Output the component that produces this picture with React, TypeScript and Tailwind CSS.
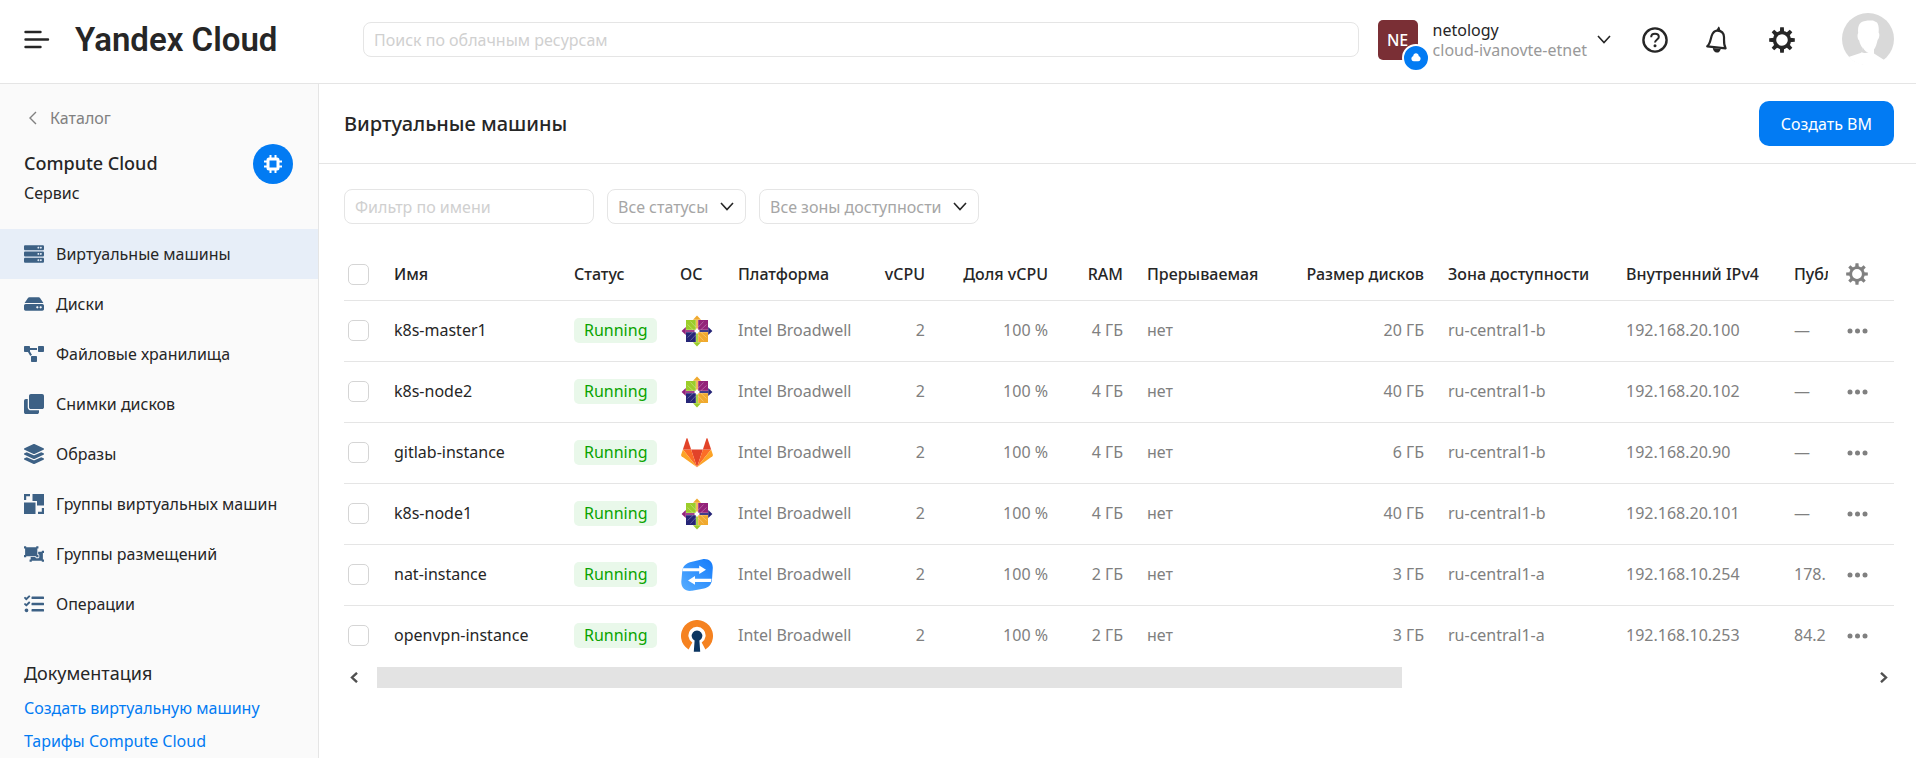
import { useEffect, useRef, useState, type ReactNode } from "react";
import { FaServer, FaHdd, FaProjectDiagram, FaClone, FaLayerGroup, FaObjectUngroup, FaTasks } from "react-icons/fa";

const teeth = [0, 45, 90, 135, 180, 225, 270, 315];

function Gear({ size, className }: { size: number; className?: string }) {
  return (
    <svg width={size} height={size} viewBox="0 0 26 26" className={className} aria-hidden="true">
      <circle cx="13" cy="13" r="7.5" fill="none" stroke="currentColor" strokeWidth="3.4" />
      {teeth.map((a) => (
        <path key={a} d="M10.8 5.5 L11.2 0.2 H14.8 L15.2 5.5 Z" fill="currentColor" transform={`rotate(${a} 13 13)`} />
      ))}
    </svg>
  );
}

function Chevron({ className }: { className?: string }) {
  return (
    <svg width="14" height="9" viewBox="0 0 14 9" fill="none" stroke="currentColor" strokeWidth="1.6" className={className} aria-hidden="true">
      <path d="M1 1 L7 7.5 L13 1" />
    </svg>
  );
}

function ScaleIcon() {
  return (
    <svg width="20" height="20" viewBox="0 0 20 20" fill="currentColor" aria-hidden="true">
      <path d="M0 0H6V2.2H2.2V6H0Z" />
      <path d="M8.5 0H20V11.5H13V7H8.5Z" />
      <path d="M0 8.5H11.5V20H0Z" />
      <path d="M17.8 14H20V20H14V17.8H17.8Z" />
    </svg>
  );
}

function CentosLogo() {
  return (
    <svg width="32" height="32" viewBox="0 0 32 32" aria-hidden="true">
      <path d="M16 .6 L20 4.8 H12Z" fill="#f0a92e" />
      <path d="M31.4 16 L27.2 20 V12Z" fill="#262577" />
      <path d="M16 31.4 L12 27.2 H20Z" fill="#9ccd2a" />
      <path d="M.6 16 L4.8 12 V20Z" fill="#932279" />
      <rect x="5" y="5" width="9.8" height="9.8" fill="#9ccd2a" />
      <rect x="17.2" y="5" width="9.8" height="9.8" fill="#932279" />
      <rect x="5" y="17.2" width="9.8" height="9.8" fill="#262577" />
      <rect x="17.2" y="17.2" width="9.8" height="9.8" fill="#f0a92e" />
      <path d="M15 4.6 H17 V14 H15Z" fill="#f3b95a" />
      <path d="M27.4 15 V17 H18 V15Z" fill="#3f3e8b" />
      <path d="M15 27.4 H17 V18 H15Z" fill="#a9d548" />
      <path d="M4.6 15 V17 H14 V15Z" fill="#a2418d" />
      <g stroke="#fff" strokeOpacity=".4" strokeWidth=".7" fill="none">
        <path d="M6.5 9.5 L12 14.6 M9.5 6.5 L14.6 12 M25.5 9.5 L20 14.6 M22.5 6.5 L17.4 12 M6.5 22.5 L12 17.4 M9.5 25.5 L14.6 20 M25.5 22.5 L20 17.4 M22.5 25.5 L17.4 20" />
      </g>
      <path d="M16 12.8 L17.2 14.8 L19.2 16 L17.2 17.2 L16 19.2 L14.8 17.2 L12.8 16 L14.8 14.8Z" fill="#fff" />
    </svg>
  );
}

function GitlabLogo() {
  return (
    <svg width="32" height="32" viewBox="0 0 32 32" aria-hidden="true">
      <path d="M16 30.3 L21.9 12.5 H10.1Z" fill="#e24329" />
      <path d="M16 30.3 L10.1 12.5 H1.9Z" fill="#fc6d26" />
      <path d="M1.9 12.5 L.1 17.8 C0 18.4 .1 18.9 .6 19.3 L16 30.3Z" fill="#fca326" />
      <path d="M1.9 12.5 H10.1 L6.6 1.7 C6.4 1.1 5.6 1.1 5.4 1.7Z" fill="#e24329" />
      <path d="M16 30.3 L21.9 12.5 H30.1Z" fill="#fc6d26" />
      <path d="M30.1 12.5 L31.9 17.8 C32 18.4 31.9 18.9 31.4 19.3 L16 30.3Z" fill="#fca326" />
      <path d="M30.1 12.5 H21.9 L25.4 1.7 C25.6 1.1 26.4 1.1 26.6 1.7Z" fill="#e24329" />
    </svg>
  );
}

function NatLogo() {
  return (
    <svg width="32" height="32" viewBox="0 0 32 32" aria-hidden="true">
      <defs>
        <linearGradient id="nat" x1="0" y1="1" x2="1" y2="0">
          <stop offset="0" stopColor="#58aeff" />
          <stop offset="1" stopColor="#147bfb" />
        </linearGradient>
      </defs>
      <path d="M10 3 L21.5 .2 C27.5 -.8 32 3 31.8 9 L31 20.5 C30.6 25.5 28 28.4 23 29.6 L11 31.8 C4.5 32.8 0 29 .3 22.5 L1.2 12.5 C1.6 7.4 5 4.1 10 3Z" fill="url(#nat)" />
      <path d="M1.7 9.2 H18.2 V6.4 L25 10.8 L18.2 15 V12.3 H1.4Z" fill="#fff" />
      <path d="M30.6 19.8 H14 V17.1 L7 21.4 L14 25.7 V22.9 H30Z" fill="#fff" />
    </svg>
  );
}

function OpenvpnLogo() {
  return (
    <svg width="32" height="32" viewBox="0 0 32 32" aria-hidden="true">
      <path d="M7.6 29.6 A16 16 0 1 1 24.4 29.6 L20.7 22.6 A8.6 8.6 0 1 0 11.3 22.6Z" fill="#f58220" />
      <path d="M13.6 20.6 A5.3 5.3 0 1 1 18.4 20.6 L19.2 31.8 H12.8Z" fill="#0b3561" />
    </svg>
  );
}

function Avatar() {
  return (
    <svg width="52" height="52" viewBox="0 0 52 52" aria-hidden="true">
      <circle cx="26" cy="26" r="26" fill="#d9d9d9" />
      <path
        d="M19 9.5 C22 7.5 27 7.3 31 7.6 L35 9.4 C36.8 12 37 16 36.6 19.5 C38 21 37.4 25 35.6 27 C34.8 31 33.6 34.4 32 36.4 V40.5 L43 47.4 C39 52 33 52.6 26 52.3 C18 52.3 11 49 6.6 44 L18.6 40 C20.6 39 20.8 37 20.6 35 C18.8 33 17.6 30 17.2 27.6 C15.4 26 15 22 16.2 20 C15.8 16 16 12 19 9.5Z"
        fill="#fff"
      />
      <path d="M20.8 34.5 C22.4 37.6 24.6 39.4 26.6 39.2 C23.6 40.6 21 39.6 19.6 39.4Z" fill="#d9d9d9" />
    </svg>
  );
}

const nav: { label: string; icon: ReactNode }[] = [
  { label: "Виртуальные машины", icon: <FaServer size={20} /> },
  { label: "Диски", icon: <FaHdd size={20} /> },
  { label: "Файловые хранилища", icon: <FaProjectDiagram size={20} /> },
  { label: "Снимки дисков", icon: <FaClone size={20} /> },
  { label: "Образы", icon: <FaLayerGroup size={20} /> },
  { label: "Группы виртуальных машин", icon: <ScaleIcon /> },
  { label: "Группы размещений", icon: <FaObjectUngroup size={20} /> },
  { label: "Операции", icon: <FaTasks size={20} /> },
];

const machines = [
  { name: "k8s-master1", os: <CentosLogo />, ram: "4 ГБ", disk: "20 ГБ", zone: "ru-central1-b", ip: "192.168.20.100", pub: "—" },
  { name: "k8s-node2", os: <CentosLogo />, ram: "4 ГБ", disk: "40 ГБ", zone: "ru-central1-b", ip: "192.168.20.102", pub: "—" },
  { name: "gitlab-instance", os: <GitlabLogo />, ram: "4 ГБ", disk: "6 ГБ", zone: "ru-central1-b", ip: "192.168.20.90", pub: "—" },
  { name: "k8s-node1", os: <CentosLogo />, ram: "4 ГБ", disk: "40 ГБ", zone: "ru-central1-b", ip: "192.168.20.101", pub: "—" },
  { name: "nat-instance", os: <NatLogo />, ram: "2 ГБ", disk: "3 ГБ", zone: "ru-central1-a", ip: "192.168.10.254", pub: "178." },
  { name: "openvpn-instance", os: <OpenvpnLogo />, ram: "2 ГБ", disk: "3 ГБ", zone: "ru-central1-a", ip: "192.168.10.253", pub: "84.2" },
];

const checkbox = "block size-[21px] appearance-none rounded-[5px] border border-[#d5d5d5] bg-white checked:bg-[#027bf3]";

function Header() {
  return (
    <header className="flex h-21 items-center border-b border-[#e5e5e5] pr-[22px] pb-1 pl-6">
      <button aria-label="Меню" className="mr-[25px] text-[#262626]">
        <svg width="26" height="20" viewBox="0 0 26 20" fill="none" stroke="currentColor" strokeWidth="2.4" strokeLinecap="round">
          <path d="M1.5 2 H16.5 M1.5 9.5 H24 M1.5 17 H16.5" />
        </svg>
      </button>
      <a href="#" className="w-72 shrink-0 font-[Roboto,sans-serif] text-[33px] leading-10 font-semibold whitespace-nowrap text-[#262626]">
        Yandex Cloud
      </a>
      <input
        aria-label="Поиск по облачным ресурсам"
        placeholder="Поиск по облачным ресурсам"
        className="h-[35px] min-w-0 flex-1 rounded-lg border border-[#e5e5e5] px-2.5 outline-none placeholder:text-[#d0d0d0]"
      />
      <div className="ml-[19px] flex items-center">
        <div className="relative flex size-10 items-center justify-center rounded-[5px] bg-[#7a2f35] font-medium text-white">
          NE
          <span className="absolute top-6 left-6 flex size-7 items-center justify-center rounded-full border-2 border-white bg-[#027bf3]">
            <svg width="10" height="9" viewBox="0 0 10 9" fill="#fff" aria-hidden="true">
              <path d="M2.2 3.2 C2.4 1 3.6 .2 5 .2 C6.4 .2 7.6 1 7.8 3.2 C9 3.6 9.6 4.4 9.6 5.6 C9.6 7.2 8.8 8.3 7.2 8.3 H2.8 C1.2 8.3 .4 7.2 .4 5.6 C.4 4.4 1 3.6 2.2 3.2Z" />
            </svg>
          </span>
        </div>
        <div className="ml-[15px] leading-5">
          <div>netology</div>
          <div className="text-[#999]">cloud-ivanovte-etnet</div>
        </div>
        <button aria-label="Выбрать облако" className="ml-2.5">
          <Chevron />
        </button>
      </div>
      <button aria-label="Справка" className="ml-[31px] text-[#262626]">
        <svg width="26" height="26" viewBox="0 0 26 26" fill="none" stroke="currentColor" strokeWidth="2.4" aria-hidden="true">
          <circle cx="13" cy="13" r="11.6" />
          <path d="M9.2 10.2 C9.2 8 10.8 6.8 13 6.8 C15.2 6.8 16.8 8 16.8 10 C16.8 12.4 13 12.6 13 15.6" strokeWidth="2" />
          <circle cx="13" cy="18.8" r="1.5" fill="currentColor" stroke="none" />
        </svg>
      </button>
      <button aria-label="Уведомления" className="ml-9 text-[#262626]">
        <svg width="26" height="28" viewBox="0 0 26 28" fill="none" stroke="currentColor" strokeWidth="2.2" strokeLinejoin="round" aria-hidden="true">
          <path d="M3.2 20.4 C6.2 18 6.4 14 7.6 10 C8.8 6.4 10.8 4.4 13.6 4.6 C17.4 4.8 19.8 7.2 20 11 C20.2 14.8 19.4 18.6 21.6 22.4 Z" />
          <path d="M13 4.4 L14.8 1.2 L16 5Z" fill="currentColor" strokeWidth="1.2" />
          <path d="M8.8 22 L16.8 23 C16 25.6 14.6 26.8 12.8 26.6 C10.8 26.4 9.2 25 8.8 22Z" fill="currentColor" stroke="none" />
        </svg>
      </button>
      <button aria-label="Настройки" className="ml-[39px] text-[#262626]">
        <Gear size={26} />
      </button>
      <button aria-label="Профиль" className="ml-[47px] pb-0.5">
        <Avatar />
      </button>
    </header>
  );
}

function Sidebar() {
  return (
    <aside className="w-[319px] shrink-0 border-r border-[#e5e5e5] bg-[#fafafa]">
      <div className="px-6 pt-5">
        <a href="#" className="flex items-center gap-3 pl-1 leading-7 text-[#808080]">
          <svg width="10" height="14" viewBox="0 0 10 14" fill="none" stroke="currentColor" strokeWidth="1.4" aria-hidden="true">
            <path d="M8 1 L2 7 L8 13" />
          </svg>
          Каталог
        </a>
      </div>
      <div className="flex items-start justify-between pt-3 pr-[25px] pl-6">
        <div>
          <h2 className="text-lg leading-[38px] font-medium">Compute Cloud</h2>
          <p className="leading-[22px]">Сервис</p>
        </div>
        <span className="flex size-10 items-center justify-center rounded-full bg-[#027bf3]">
          <svg width="18" height="18" viewBox="0 0 18 18" fill="none" stroke="#fff" aria-hidden="true">
            <rect x="4" y="4" width="10" height="10" rx="1" strokeWidth="3" />
            <path d="M6.5 0 V3 M11.5 0 V3 M6.5 15 V18 M11.5 15 V18 M0 6.5 H3 M0 11.5 H3 M15 6.5 H18 M15 11.5 H18" strokeWidth="2" />
          </svg>
        </span>
      </div>
      <nav className="mt-[25px]">
        {nav.map((item, i) => (
          <a key={item.label} href="#" className={i === 0 ? "flex h-[50px] items-center gap-3 bg-[#e7eef8] px-6" : "flex h-[50px] items-center gap-3 px-6"}>
            <span className="text-[#3d6185]">{item.icon}</span>
            {item.label}
          </a>
        ))}
      </nav>
      <div className="px-6 pt-8">
        <h3 className="text-lg leading-6">Документация</h3>
        <div className="flex flex-col pt-[7px] leading-[33px] text-[#027bf3]">
          <a href="#">Создать виртуальную машину</a>
          <a href="#">Тарифы Compute Cloud</a>
        </div>
      </div>
    </aside>
  );
}

function Filter({ label }: { label: string }) {
  return (
    <div className="relative flex items-center">
      <select aria-label={label} className="h-[35px] appearance-none rounded-lg border border-[#e5e5e5] bg-white pr-9 pl-2.5 text-[#a6a6a6] outline-none">
        <option>{label}</option>
      </select>
      <Chevron className="pointer-events-none absolute right-3" />
    </div>
  );
}

function MachinesTable() {
  const ref = useRef<HTMLDivElement>(null);
  const [bar, setBar] = useState({ left: 0, width: 100 });

  const measure = () => {
    const el = ref.current;
    if (el) setBar({ left: (el.scrollLeft / el.scrollWidth) * 100, width: (el.clientWidth / el.scrollWidth) * 100 });
  };

  useEffect(() => {
    measure();
    window.addEventListener("resize", measure);
    return () => window.removeEventListener("resize", measure);
  }, []);

  const th = "h-[51px] border-b border-[#e5e5e5] px-3 pb-0.5 text-left font-medium whitespace-nowrap";
  const thRight = "h-[51px] border-b border-[#e5e5e5] px-3 pb-0.5 text-right font-medium whitespace-nowrap";
  const cell = "h-[61px] border-b border-[#e5e5e5] px-3 pb-0.5 whitespace-nowrap group-last:border-transparent";
  const right = "h-[61px] border-b border-[#e5e5e5] px-3 pb-0.5 text-right whitespace-nowrap group-last:border-transparent";

  return (
    <div className="mt-[26px]">
      <div ref={ref} onScroll={measure} className="overflow-x-hidden">
        <table className="w-[2260px] table-fixed border-separate border-spacing-0">
          <colgroup>
            <col className="w-[38px]" />
            <col className="w-[180px]" />
            <col className="w-[106px]" />
            <col className="w-[58px]" />
            <col className="w-[134px]" />
            <col className="w-[77px]" />
            <col className="w-[123px]" />
            <col className="w-[75px]" />
            <col className="w-[151px]" />
            <col className="w-[150px]" />
            <col className="w-[178px]" />
            <col className="w-[168px]" />
            <col />
            <col className="w-[66px]" />
          </colgroup>
          <thead>
            <tr>
              <th className="h-[51px] border-b border-[#e5e5e5] pb-0.5 pl-1">
                <input type="checkbox" aria-label="Выбрать все" className={checkbox} />
              </th>
              <th className={th}>Имя</th>
              <th className={th}>Статус</th>
              <th className={th}>ОС</th>
              <th className={th}>Платформа</th>
              <th className={thRight}>vCPU</th>
              <th className={thRight}>Доля vCPU</th>
              <th className={thRight}>RAM</th>
              <th className={th}>Прерываемая</th>
              <th className={thRight}>Размер дисков</th>
              <th className={th}>Зона доступности</th>
              <th className={th}>Внутренний IPv4</th>
              <th className={th}>Публичный IPv4</th>
              <th className="sticky right-0 border-b border-[#e5e5e5] bg-white pb-0.5 pl-[18px] text-[#808080]">
                <button aria-label="Настроить столбцы" className="block">
                  <Gear size={22} />
                </button>
              </th>
            </tr>
          </thead>
          <tbody className="text-[#808080]">
            {machines.map((m) => (
              <tr key={m.name} className="group">
                <td className="border-b border-[#e5e5e5] pb-0.5 pl-1 group-last:border-transparent">
                  <input type="checkbox" aria-label={m.name} className={checkbox} />
                </td>
                <td className={cell}>
                  <a href="#" className="text-[#262626]">{m.name}</a>
                </td>
                <td className={cell}>
                  <span className="inline-block rounded-[5px] bg-[#e9f8ea] px-2.5 leading-[25px] text-[#0aa300]">Running</span>
                </td>
                <td className="border-b border-[#e5e5e5] pl-[13px] group-last:border-transparent">{m.os}</td>
                <td className={cell}>Intel Broadwell</td>
                <td className={right}>2</td>
                <td className={right}>100 %</td>
                <td className={right}>{m.ram}</td>
                <td className={cell}>нет</td>
                <td className={right}>{m.disk}</td>
                <td className={cell}>{m.zone}</td>
                <td className={cell}>{m.ip}</td>
                <td className={cell}>{m.pub}</td>
                <td className="sticky right-0 border-b border-[#e5e5e5] bg-white pl-[19px] group-last:border-transparent">
                  <button aria-label="Действия" className="block">
                    <svg width="22" height="6" viewBox="0 0 22 6" fill="currentColor">
                      <circle cx="3" cy="3" r="2.5" />
                      <circle cx="10.5" cy="3" r="2.5" />
                      <circle cx="18" cy="3" r="2.5" />
                    </svg>
                  </button>
                </td>
              </tr>
            ))}
          </tbody>
        </table>
      </div>
      <div className="flex h-[21px] text-[#505050]">
        <button aria-label="Прокрутить влево" className="flex w-[33px] items-center pl-1.5" onClick={() => ref.current?.scrollBy({ left: -80 })}>
          <svg width="8" height="11" viewBox="0 0 8 11" fill="none" stroke="currentColor" strokeWidth="2.4">
            <path d="M7 .8 L2 5.5 L7 10.2" />
          </svg>
        </button>
        <div className="flex-1">
          <div className="relative h-full bg-[#e3e3e3]" style={{ left: `${bar.left}%`, width: `${bar.width}%` }} />
        </div>
        <button aria-label="Прокрутить вправо" className="flex w-[22px] items-center pl-2" onClick={() => ref.current?.scrollBy({ left: 80 })}>
          <svg width="8" height="11" viewBox="0 0 8 11" fill="none" stroke="currentColor" strokeWidth="2.4">
            <path d="M1 .8 L6 5.5 L1 10.2" />
          </svg>
        </button>
      </div>
    </div>
  );
}

export default function App() {
  return (
    <div className="flex h-screen flex-col overflow-hidden bg-white font-['Noto_Sans',sans-serif] text-base text-[#262626]">
      <Header />
      <div className="flex min-h-0 flex-1">
        <Sidebar />
        <main className="min-w-0 flex-1">
          <div className="flex h-20 items-center justify-between border-b border-[#e5e5e5] pr-[22px] pl-[25px]">
            <h1 className="text-xl font-medium">Виртуальные машины</h1>
            <button className="h-[45px] rounded-[10px] bg-[#027bf3] px-[22px] text-white">Создать ВМ</button>
          </div>
          <div className="pt-[25px] pr-[22px] pl-[25px]">
            <div className="flex gap-[13px]">
              <input
                aria-label="Фильтр по имени"
                placeholder="Фильтр по имени"
                className="h-[35px] w-[250px] rounded-lg border border-[#e5e5e5] px-2.5 outline-none placeholder:text-[#d0d0d0]"
              />
              <Filter label="Все статусы" />
              <Filter label="Все зоны доступности" />
            </div>
            <MachinesTable />
          </div>
        </main>
      </div>
    </div>
  );
}
